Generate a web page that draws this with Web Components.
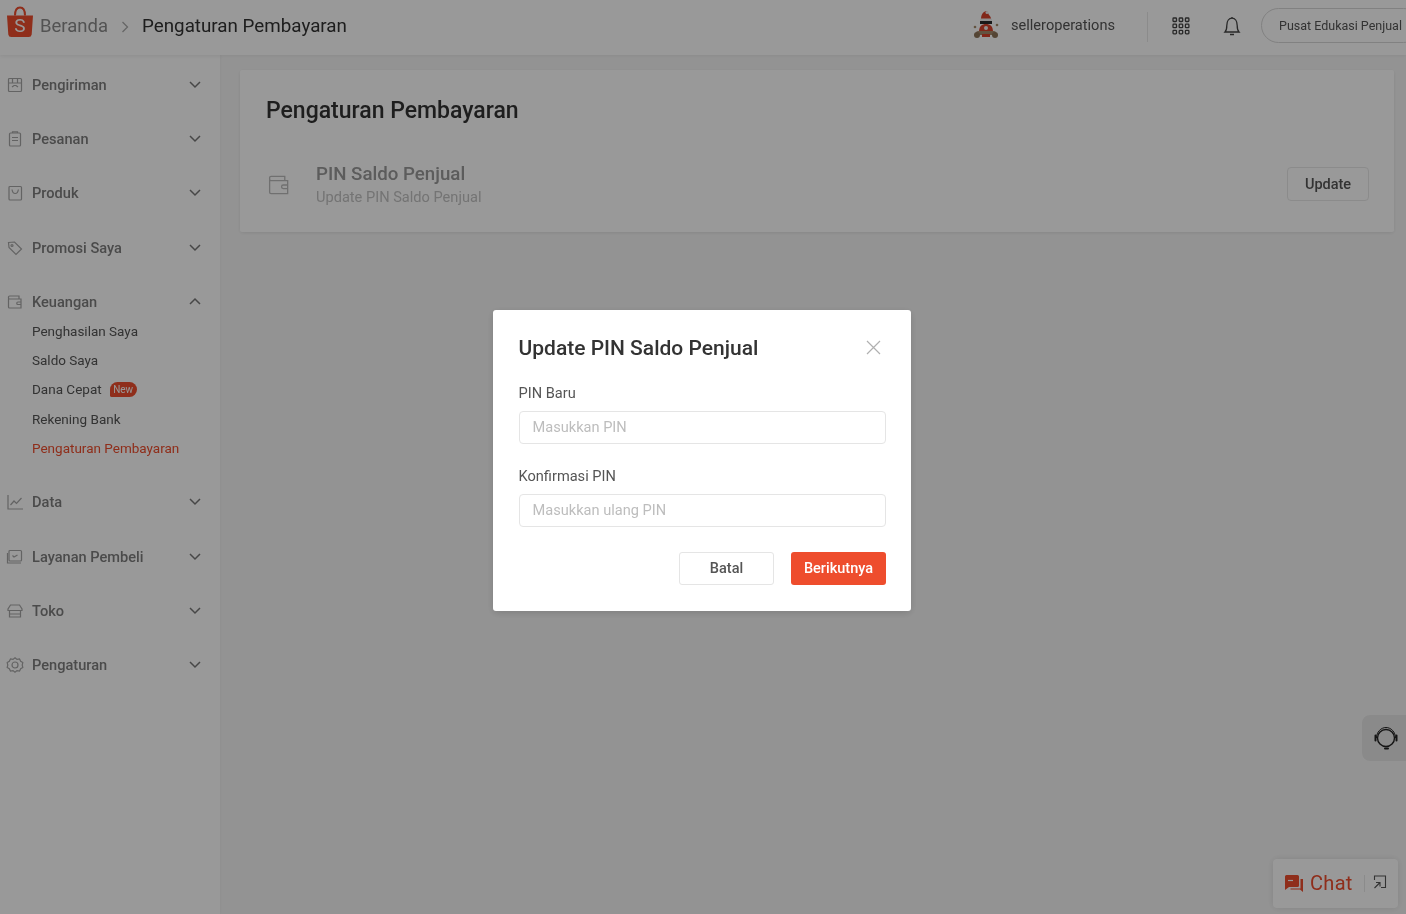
<!DOCTYPE html>
<html lang="id">
<head>
<meta charset="utf-8">
<title>Pengaturan Pembayaran</title>
<style>
  html, body { margin: 0; height: 100%; overflow: hidden; }
  body { font-family: Roboto, "Liberation Sans", sans-serif; background: #f6f6f6; color: #333; filter: blur(.5px); }
  seller-shell { height: 914px; }
</style>
</head>
<body>
<seller-shell>
  <seller-header slot="header"></seller-header>
  <side-nav slot="nav">
    <nav-group label="Pengiriman" icon="box"></nav-group>
    <nav-group label="Pesanan" icon="list"></nav-group>
    <nav-group label="Produk" icon="bag"></nav-group>
    <nav-group label="Promosi Saya" icon="tag"></nav-group>
    <nav-group label="Keuangan" icon="wallet" open>
      <nav-link>Penghasilan Saya</nav-link>
      <nav-link>Saldo Saya</nav-link>
      <nav-link badge="New">Dana Cepat</nav-link>
      <nav-link>Rekening Bank</nav-link>
      <nav-link active>Pengaturan Pembayaran</nav-link>
    </nav-group>
    <nav-group label="Data" icon="chart"></nav-group>
    <nav-group label="Layanan Pembeli" icon="chat"></nav-group>
    <nav-group label="Toko" icon="shop"></nav-group>
    <nav-group label="Pengaturan" icon="gear"></nav-group>
  </side-nav>
  <payment-card slot="main"></payment-card>
</seller-shell>
<pin-dialog></pin-dialog>
<support-button></support-button>
<chat-button></chat-button>

<script>
const ICONS = {
  box: '<rect x="2.5" y="2.5" width="13" height="13" rx="1"/><path d="M2.5 7h13M6.5 2.5v4.5M11.5 2.5v4.5M6 11l2-1.5h2l2 1.5"/>',
  list: '<rect x="3.5" y="3" width="11" height="13" rx="1"/><path d="M6.5 3V1.800h5V3M6 7.500h6M6 10.500h6"/>',
  bag: '<rect x="3" y="2.500" width="12.500" height="13.500" rx="1"/><path d="M6 5.500c.5 3 2 4 3.200 4s2.700-1 3.200-4"/>',
  tag: '<path d="M2.500 3.500l6-.5 7 7-5.500 5.500-7-7z"/><circle cx="6" cy="6.500" r="1"/>',
  wallet: '<path d="M2.500 5.500V14a1 1 0 0 0 1 1h11.500V6H3.500a1 1 0 0 1-1-1V4a1 1 0 0 1 1-1h9.500v3"/><path d="M15 9h-3a1 1 0 0 0 0 2.500h3"/>',
  chart: '<path d="M2 2v14h15M4.500 12l3.500-4 2.500 2.500 5-5.500"/>',
  chat: '<rect x="3" y="2.500" width="12.500" height="10.500" rx="1"/><path d="M1.500 5v10h13.500M6.500 7.500l1.500 1.500 3.500-2"/>',
  shop: '<path d="M4.500 3h9l2.500 4v1.500H2V7zM3.500 8.500V15h11V8.500M1.500 8.500h15M3.500 12h11"/>',
  gear: '<path d="M9 1.800l2 1.600 2.500-.4 1.200 2.300 2.100 1.300-.6 2.400.6 2.400-2.100 1.300-1.200 2.300-2.500-.4-2 1.600-2-1.600-2.500.4-1.200-2.300-2.100-1.300.6-2.400-.6-2.400 2.100-1.300 1.200-2.300 2.500.4z"/><circle cx="9" cy="9" r="3"/>'
};

class SellerShell extends HTMLElement {
  constructor() {
    super();
    this.attachShadow({ mode: 'open' }).innerHTML = `
      <style>
        :host { display: grid; grid-template-columns: 220px 1fr; grid-template-rows: 55px 1fr; }
        .top { grid-column: 1 / 3; display: block; }
        .main { padding: 15px 12px 0 20px; min-width: 0; }
      </style>
      <div class="top"><slot name="header"></slot></div>
      <slot name="nav"></slot>
      <div class="main"><slot name="main"></slot></div>`;
  }
}

class SellerHeader extends HTMLElement {
  constructor() {
    super();
    this.attachShadow({ mode: 'open' }).innerHTML = `
      <style>
        :host { display: flex; align-items: center; height: 55px; box-sizing: border-box; background: #fff; box-shadow: 0 1px 4px rgba(0,0,0,.08); padding: 0 0 2px 6px; white-space: nowrap; overflow: hidden; position: relative; }
        .logo { width: 28px; height: 32px; margin: -10px 6px 0 0; flex: none; }
        .home { font-size: 18.500px; color: #8b8b8b; margin-top: -1px; }
        .sep { width: 8px; height: 12px; margin: 0 13px; flex: none; }
        .page { font-size: 18.800px; color: #333; margin-top: -2px; }
        .space { flex: 1; }
        .user { display: flex; align-items: center; font-size: 14.600px; color: #555; margin-top: -3px; }
        .user svg { width: 28px; height: 30px; margin-right: 11px; }
        .line { width: 1px; height: 30px; background: #e8e8e8; margin: 0 24px 0 32px; }
        .grid { width: 18px; height: 18px; margin-right: 33px; margin-top: -2px; }
        .bell { width: 18px; height: 20px; margin-right: 20px; margin-top: -2px; }
        .edu { width: 160px; flex: none; height: 35px; margin: -3px -15px 0 0; box-sizing: border-box; border: 1px solid #d8d8d8; border-radius: 18px; padding-left: 17px; display: flex; align-items: center; font-size: 12.500px; color: #555; }
      </style>
      <svg class="logo" viewBox="0 0 28 32">
        <path d="M1 9.500h26l-1.300 19a3 3 0 0 1-3 2.500H5.300a3 3 0 0 1-3-2.500z" fill="#ee4d2d"/>
        <path d="M9 9.500C9 4 11 1.500 14 1.500s5 2.500 5 8" fill="none" stroke="#ee4d2d" stroke-width="2"/>
        <text x="14" y="26" text-anchor="middle" font-family="Roboto, sans-serif" font-size="19" fill="#fff">S</text>
      </svg>
      <span class="home">Beranda</span>
      <svg class="sep" viewBox="0 0 8 12"><path d="M1.500 1l5 5-5 5" fill="none" stroke="#aaa" stroke-width="1.300"/></svg>
      <span class="page">Pengaturan Pembayaran</span>
      <span class="space"></span>
      <span class="user">
        <svg viewBox="0 0 28 30">
          <path d="M15 1c-4 0-6 4-6 8h10c0-2-1-3-2-4z" fill="#d7412b"/>
          <circle cx="15" cy="2.500" r="1.500" fill="#efefef"/>
          <rect x="8" y="8.500" width="12" height="2.500" rx="1" fill="#efefef"/>
          <rect x="8" y="11" width="12" height="3" fill="#2b2b2b"/>
          <path d="M7 22c0-6 3-8 7-8s7 2 7 8z" fill="#d7412b"/>
          <circle cx="14" cy="18" r="2" fill="#f0f0f0"/>
          <rect x="4" y="21" width="20" height="4" rx="2" fill="#a58a6c"/>
          <circle cx="5" cy="25" r="3" fill="#8d7358"/><circle cx="23" cy="25" r="3" fill="#8d7358"/>
          <path d="M10 24h8v3h-8z" fill="#d7412b"/>
          <circle cx="25" cy="15" r="1.300" fill="#a58a6c"/><circle cx="3" cy="17" r="1.300" fill="#a58a6c"/>
        </svg>
        selleroperations
      </span>
      <span class="line"></span>
      <svg class="grid" viewBox="0 0 18 18" fill="none" stroke="#444" stroke-width="1.300">
        <rect x="1" y="1" width="3.500" height="3.500" rx=".8"/><rect x="7.200" y="1" width="3.500" height="3.500" rx=".8"/><rect x="13.400" y="1" width="3.500" height="3.500" rx=".8"/>
        <rect x="1" y="7.200" width="3.500" height="3.500" rx=".8"/><rect x="7.200" y="7.200" width="3.500" height="3.500" rx=".8"/><rect x="13.400" y="7.200" width="3.500" height="3.500" rx=".8"/>
        <rect x="1" y="13.400" width="3.500" height="3.500" rx=".8"/><rect x="7.200" y="13.400" width="3.500" height="3.500" rx=".8"/><rect x="13.400" y="13.400" width="3.500" height="3.500" rx=".8"/>
      </svg>
      <svg class="bell" viewBox="0 0 18 20" fill="none" stroke="#444" stroke-width="1.300">
        <path d="M2 16c1.500-1.500 1.800-3 1.800-6.500C3.800 5 6 2.200 9 2.200s5.200 2.800 5.200 7.300c0 3.500.3 5 1.800 6.500z"/><path d="M7 18.500h4M9 1v1.200"/>
      </svg>
      <span class="edu">Pusat Edukasi Penjual</span>`;
  }
}

class SideNav extends HTMLElement {
  constructor() {
    super();
    this.attachShadow({ mode: 'open' }).innerHTML = `
      <style>
        :host { display: block; background: #fff; height: 859px; padding-top: 3px; box-sizing: border-box; box-shadow: 1px 0 3px rgba(0,0,0,.05); }
      </style>
      <slot></slot>`;
  }
}

class NavGroup extends HTMLElement {
  connectedCallback() {
    const open = this.hasAttribute('open');
    const arrow = open ? 'M2 8l5-5 5 5' : 'M2 3l5 5 5-5';
    this.attachShadow({ mode: 'open' }).innerHTML = `
      <style>
        :host { display: block; }
        .row { height: 54.200px; display: flex; align-items: center; padding: 0 18px 0 6px; font-size: 14.600px; font-weight: 500; color: #7d7d7d; }
        :host([open]) .row { height: 27.600px; margin-top: 13.400px; }
        :host([open]) .subs { padding: .5px 0 12.500px; }
        .ic { width: 18px; height: 18px; margin-right: 8px; flex: none; }
        .lab { flex: 1; }
        .arr { width: 14px; height: 11px; margin-top: -1px; }
      </style>
      <div class="row">
        <svg class="ic" viewBox="0 0 18 18" fill="none" stroke="#a6a6a6" stroke-width="1.200">${ICONS[this.getAttribute('icon')]}</svg>
        <span class="lab">${this.getAttribute('label')}</span>
        <svg class="arr" viewBox="0 0 14 11"><path d="${arrow}" fill="none" stroke="#777" stroke-width="1.500"/></svg>
      </div>
      <div class="subs"><slot></slot></div>`;
  }
}

class NavLink extends HTMLElement {
  connectedCallback() {
    const badge = this.getAttribute('badge');
    this.attachShadow({ mode: 'open' }).innerHTML = `
      <style>
        :host { display: flex; align-items: center; height: 29.300px; padding-left: 32px; font-size: 13.500px; color: #555; white-space: nowrap; }
        :host([active]) { color: #ee4d2d; }
        .badge { margin-left: 8px; height: 15px; width: 27px; border-radius: 8px 8px 8px 2px; background: #ee4d2d; color: #fff; font-size: 10px; display: flex; align-items: center; justify-content: center; }
      </style>
      <slot></slot>${badge ? `<span class="badge">${badge}</span>` : ''}`;
  }
}

class PaymentCard extends HTMLElement {
  constructor() {
    super();
    this.attachShadow({ mode: 'open' }).innerHTML = `
      <style>
        :host { display: block; height: 162px; box-sizing: border-box; background: #fff; border-radius: 2px; box-shadow: 0 1px 4px rgba(0,0,0,.1); padding: 25px 26px 0; }
        h1 { margin: 0; font-size: 23px; line-height: 32px; font-weight: 500; color: #333; }
        .row { display: flex; align-items: center; margin-top: 36px; }
        .ic { width: 26px; height: 26px; margin-right: 24px; flex: none; }
        .txt { flex: 1; }
        .name { font-size: 18.700px; line-height: 22px; color: #999; font-weight: 500; }
        .sub { font-size: 14.600px; line-height: 20px; color: #c2c2c2; margin-top: 2px; }
        .btn { width: 82px; height: 34px; box-sizing: border-box; border: 1px solid #e8e8e8; border-radius: 4px; display: flex; align-items: center; justify-content: center; font-size: 14.500px; font-weight: 500; color: #555; margin: -2px -1px 0 0; }
      </style>
      <h1>Pengaturan Pembayaran</h1>
      <div class="row">
        <svg class="ic" viewBox="0 0 18 18" fill="none" stroke="#bbb" stroke-width=".9">${ICONS.wallet}</svg>
        <div class="txt"><div class="name">PIN Saldo Penjual</div><div class="sub">Update PIN Saldo Penjual</div></div>
        <span class="btn">Update</span>
      </div>`;
  }
}

class PinField extends HTMLElement {
  connectedCallback() {
    this.attachShadow({ mode: 'open' }).innerHTML = `
      <style>
        :host { display: block; }
        label { display: block; font-size: 14.600px; line-height: 20px; color: #555; margin-bottom: 8px; }
        .box { height: 33px; box-sizing: border-box; border: 1px solid #e5e5e5; border-radius: 4px; padding: 0 0 1px 13px; display: flex; align-items: center; font-size: 14.600px; color: #bdbdbd; }
      </style>
      <label>${this.getAttribute('label')}</label>
      <div class="box">${this.getAttribute('hint')}</div>`;
  }
}

class PinDialog extends HTMLElement {
  constructor() {
    super();
    this.attachShadow({ mode: 'open' }).innerHTML = `
      <style>
        :host { position: fixed; inset: 0; background: rgba(0,0,0,.4); z-index: 10; }
        .modal { position: absolute; left: 493px; top: 310px; width: 418px; height: 301px; box-sizing: border-box; background: #fff; border-radius: 3px; box-shadow: 0 2px 8px rgba(0,0,0,.15); padding: 22px 25px 0 25.500px; }
        .head { display: flex; align-items: center; justify-content: space-between; height: 32px; margin-bottom: 19px; }
        h2 { margin: 0; font-size: 21px; font-weight: 500; color: #333; }
        .close { width: 15px; height: 15px; margin: -2px 5px 0 0; }
        pin-field + pin-field { margin-top: 22px; }
        .foot { display: flex; justify-content: flex-end; gap: 17px; margin-top: 25px; }
        .btn { height: 33px; box-sizing: border-box; border-radius: 3px; display: flex; align-items: center; justify-content: center; font-size: 14.500px; font-weight: 500; }
        .cancel { width: 95px; border: 1px solid #e5e5e5; color: #555; }
        .next { width: 95px; background: #ee4d2d; color: #fff; }
      </style>
      <div class="modal">
        <div class="head">
          <h2>Update PIN Saldo Penjual</h2>
          <svg class="close" viewBox="0 0 15 15"><path d="M1 1l13 13M14 1L1 14" fill="none" stroke="#b0b0b0" stroke-width="1.200"/></svg>
        </div>
        <pin-field label="PIN Baru" hint="Masukkan PIN"></pin-field>
        <pin-field label="Konfirmasi PIN" hint="Masukkan ulang PIN"></pin-field>
        <div class="foot"><span class="btn cancel">Batal</span><span class="btn next">Berikutnya</span></div>
      </div>`;
  }
}

class SupportButton extends HTMLElement {
  constructor() {
    super();
    this.attachShadow({ mode: 'open' }).innerHTML = `
      <style>
        :host { position: fixed; left: 1362px; top: 715px; width: 44px; height: 46px; z-index: 5; background: #e6e6e6; border-radius: 8px 0 0 8px; display: flex; align-items: center; justify-content: center; }
        svg { width: 28px; height: 28px; margin-left: 3px; }
      </style>
      <svg viewBox="0 0 28 28" fill="none" stroke="#222">
        <circle cx="14" cy="14" r="8.500" stroke-width="1.400"/>
        <path d="M4.500 14C4.500 8 9 3.500 14 3.500S23.500 8 23.500 14" stroke-width="1"/>
        <path d="M3.500 11.500v5M24.500 11.500v5M13 24.500h3" stroke-width="2" stroke-linecap="round"/>
      </svg>`;
  }
}

class ChatButton extends HTMLElement {
  constructor() {
    super();
    this.attachShadow({ mode: 'open' }).innerHTML = `
      <style>
        :host { position: fixed; left: 1273px; top: 859px; width: 125px; height: 49px; z-index: 5; box-sizing: border-box; background: #fff; border-radius: 4px; box-shadow: 0 0 8px rgba(0,0,0,.12); display: flex; align-items: center; padding-left: 11px; }
        .bubble { width: 20px; height: 19px; margin-right: 6px; }
        .word { font-size: 20px; font-weight: 400; color: #ee4d2d; letter-spacing: .3px; margin-top: -2px; }
        .line { width: 1px; height: 17px; background: #e8e8e8; margin: 0 8px 0 11px; }
        .min { width: 14px; height: 14px; margin-top: -3px; }
      </style>
      <svg class="bubble" viewBox="0 0 20 19">
        <path d="M1 2.500A1.500 1.500 0 0 1 2.500 1h11A1.500 1.500 0 0 1 15 2.500v9a1.500 1.500 0 0 1-1.500 1.500H5l-4 3z" fill="#ee4d2d"/>
        <path d="M16.500 5H19v13l-3-2.500H6.500v-1h10z" fill="#ee4d2d"/>
        <path d="M4 6.500h5" stroke="#fff" stroke-width="1.200"/>
      </svg>
      <span class="word">Chat</span>
      <span class="line"></span>
      <svg class="min" viewBox="0 0 14 14" fill="none" stroke="#555" stroke-width="1.100">
        <path d="M1.500 5V1h11v11.500H8"/><path d="M1.500 13l5-5M3 7.500h4v4"/>
      </svg>`;
  }
}

customElements.define('seller-shell', SellerShell);
customElements.define('seller-header', SellerHeader);
customElements.define('side-nav', SideNav);
customElements.define('nav-group', NavGroup);
customElements.define('nav-link', NavLink);
customElements.define('payment-card', PaymentCard);
customElements.define('pin-field', PinField);
customElements.define('pin-dialog', PinDialog);
customElements.define('support-button', SupportButton);
customElements.define('chat-button', ChatButton);
</script>
</body>
</html>
